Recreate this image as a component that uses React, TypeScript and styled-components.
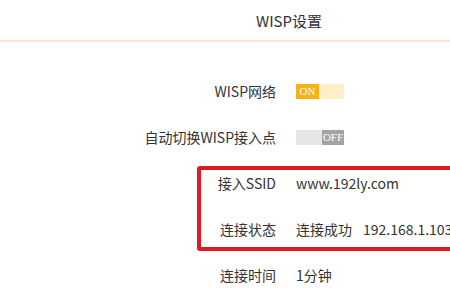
import styled, { createGlobalStyle } from 'styled-components'

const GlobalStyle = createGlobalStyle`
  html, body {
    margin: 0;
    padding: 0;
    background: #fff;
  }
  body {
    font-family: "Noto Sans CJK SC", "Noto Sans", sans-serif;
    color: #333;
    overflow: hidden;
  }
`

const Page = styled.div`
  position: relative;
  width: 450px;
  height: 300px;
  overflow: hidden;
`

const Header = styled.div`
  height: 40px;
  border-bottom: 2px solid #f8e9cc;
  display: flex;
  align-items: center;
  padding-left: 256px;
  font-size: 15px;
  color: #333;
`

const Form = styled.div`
  display: grid;
  grid-template-columns: 276px 1fr;
  grid-auto-rows: 46px;
  column-gap: 20px;
  padding-top: 26px;
  font-size: 14px;
`

const Label = styled.div`
  display: flex;
  align-items: center;
  justify-content: flex-end;
  color: #333;
  white-space: nowrap;
`

const Value = styled.div`
  display: flex;
  align-items: center;
  gap: 11px;
  color: #333;
  white-space: nowrap;
`

const Switch = styled.div<{ $on: boolean }>`
  display: flex;
  width: 48px;
  height: 15px;
  flex-direction: ${(p) => (p.$on ? 'row' : 'row-reverse')};
  background: ${(p) => (p.$on ? '#fdf0c9' : '#e6e6e6')};
`

const Knob = styled.span<{ $on: boolean }>`
  width: ${(p) => (p.$on ? '23px' : '22px')};
  height: 15px;
  display: flex;
  align-items: center;
  justify-content: center;
  background: ${(p) => (p.$on ? '#f5b21a' : '#a3a3a3')};
  color: #fff;
  font-family: "Liberation Serif", serif;
  font-size: 11px;
  line-height: 15px;
`

const Highlight = styled.div`
  position: absolute;
  left: 197px;
  top: 166px;
  width: 270px;
  height: 77px;
  border: 4px solid #e01a22;
  border-radius: 3px;
  pointer-events: none;
`

const Toggle = ({ on }: { on: boolean }) => (
  <Switch $on={on}>
    <Knob $on={on}>{on ? 'ON' : 'OFF'}</Knob>
  </Switch>
)

export default function App() {
  return (
    <Page>
      <GlobalStyle />
      <Header>WISP设置</Header>
      <Form>
        <Label>WISP网络</Label>
        <Value>
          <Toggle on />
        </Value>
        <Label>自动切换WISP接入点</Label>
        <Value>
          <Toggle on={false} />
        </Value>
        <Label>接入SSID</Label>
        <Value>www.192ly.com</Value>
        <Label>连接状态</Label>
        <Value>
          <span>连接成功</span>
          <span>192.168.1.103</span>
        </Value>
        <Label>连接时间</Label>
        <Value>1分钟</Value>
      </Form>
      <Highlight />
    </Page>
  )
}
